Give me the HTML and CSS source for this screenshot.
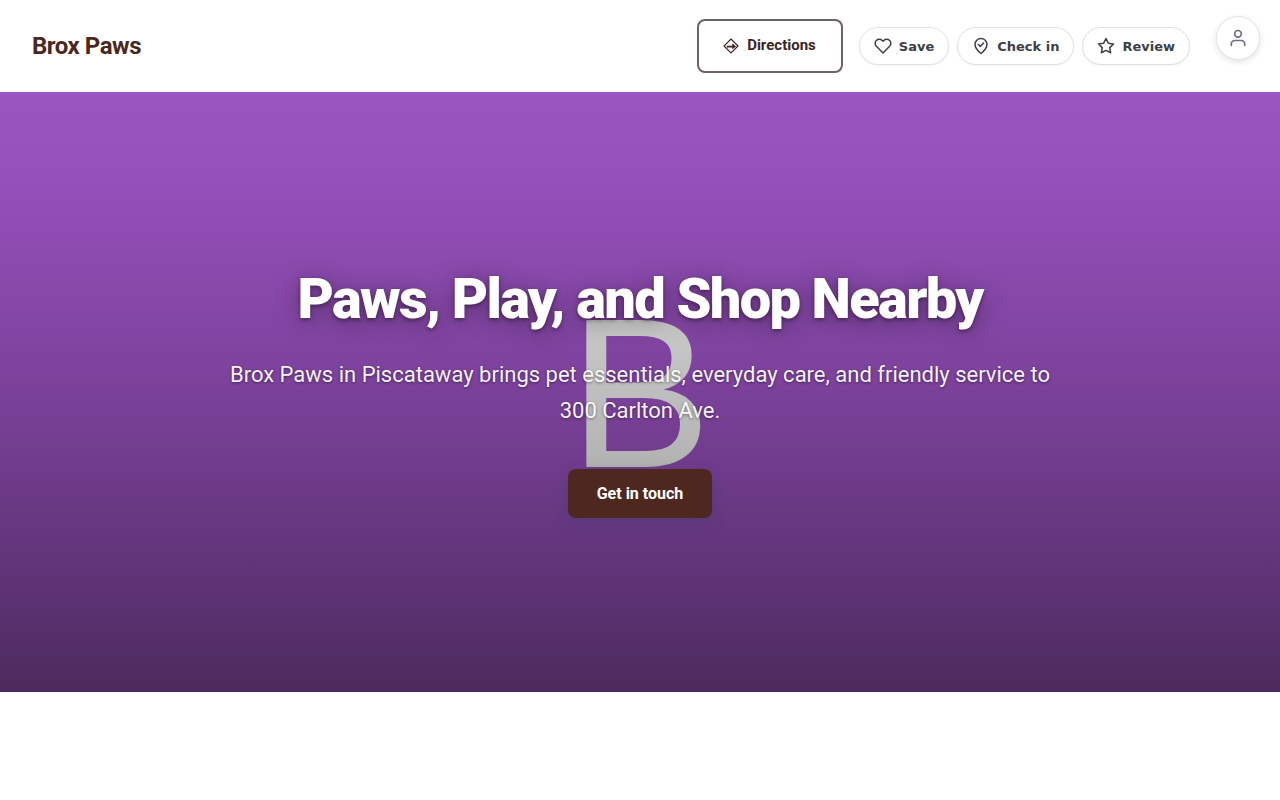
FILE: index.html
```html
<!DOCTYPE html>
<html lang="en">
<head>
<meta charset="utf-8">
<meta name="viewport" content="width=device-width, initial-scale=1">
<title>Brox Paws</title>
<link rel="stylesheet" href="styles.css">
</head>
<body>
<header class="site-header">
  <a class="brand" href="#">Brox Paws</a>
  <nav class="actions" aria-label="Quick actions">
    <a class="directions" href="#">
      <svg class="directions-icon" viewBox="0 0 16 16" fill="none" stroke="currentColor" aria-hidden="true"><path d="M8 1 15 8 8 15 1 8z" stroke-width="1.2"/><path d="M3.800 9.800V7.700H9.300V5.300L13 8.400 9.300 11.200V9.500H5z" fill="currentColor" stroke="none"/></svg>
      <span>Directions</span>
    </a>
    <div class="pills">
      <button class="pill" type="button">
        <svg class="icon" viewBox="0 0 24 24" aria-hidden="true"><path d="M20.84 4.61a5.5 5.5 0 0 0-7.78 0L12 5.67l-1.06-1.06a5.5 5.5 0 0 0-7.78 7.78L12 21.23l8.84-8.84a5.5 5.5 0 0 0 0-7.78z"/></svg>
        <span>Save</span>
      </button>
      <button class="pill" type="button">
        <svg class="icon" viewBox="0 0 24 24" aria-hidden="true"><path d="M12 22s8-6.2 8-12.2A7.9 7.9 0 0 0 12 2a7.9 7.9 0 0 0-8 7.8C4 15.800 12 22 12 22z"/><path d="m8.500 10 2.500 2.500 4.500-4.500"/></svg>
        <span>Check in</span>
      </button>
      <button class="pill" type="button">
        <svg class="icon" viewBox="0 0 24 24" aria-hidden="true"><path d="m12 2 3.090 6.260L22 9.270l-5 4.870 1.180 6.880L12 17.770l-6.180 3.250L7 14.140 2 9.270l6.910-1.010z"/></svg>
        <span>Review</span>
      </button>
    </div>
    <button class="account" type="button" aria-label="Account">
      <svg class="account-icon" viewBox="0 0 24 24" aria-hidden="true"><path d="M20 21v-2a4 4 0 0 0-4-4H8a4 4 0 0 0-4 4v2"/><circle cx="12" cy="7" r="4"/></svg>
    </button>
  </nav>
</header>
<main>
  <section class="hero">
    <div class="monogram" aria-hidden="true">B</div>
    <div class="hero-content">
      <h1 class="hero-title">Paws, Play, and Shop Nearby</h1>
      <p class="hero-text">Brox Paws in Piscataway brings pet essentials, everyday care, and friendly service to 300 Carlton Ave.</p>
      <a class="cta" href="#">Get in touch</a>
    </div>
  </section>
</main>
</body>
</html>
```
FILE: styles.css
```css
* { box-sizing: border-box; }

body {
  margin: 0;
  background: #fff;
  color: #4a281e;
  font-family: Roboto, sans-serif;
}

a { color: inherit; text-decoration: none; }

button { font: inherit; cursor: pointer; }

.site-header {
  display: flex;
  align-items: center;
  justify-content: space-between;
  min-height: 92px;
  padding: 16px 20px 16px 32px;
}

.brand {
  font-size: 24px;
  font-weight: 700;
  line-height: 32px;
  letter-spacing: -0.02em;
}

.actions {
  display: flex;
  align-items: center;
  align-self: stretch;
}

.directions {
  display: flex;
  align-items: center;
  gap: 8px;
  height: 54px;
  margin-right: 16px;
  padding: 0 25px 0 24px;
  border: 2px solid #6e6263;
  border-radius: 8px;
  color: #3b2524;
  font-size: 15px;
  font-weight: 700;
  line-height: 24px;
}

.directions span { padding-bottom: 2px; }

.directions-icon { width: 16px; height: 16px; }

.pills { display: flex; gap: 8px; }

.pill {
  display: flex;
  align-items: center;
  gap: 7px;
  height: 38px;
  padding: 0 14px;
  border: 1px solid #dfe1e4;
  border-radius: 20px;
  background: #fff;
  box-shadow: 0 1px 2px rgba(0, 0, 0, 0.05);
  color: #3c4045;
  font-family: "DejaVu Sans", sans-serif;
  font-size: 13px;
  font-weight: 700;
}

.icon, .account-icon {
  width: 18px;
  height: 18px;
  fill: none;
  stroke: currentColor;
  stroke-width: 2;
  stroke-linecap: round;
  stroke-linejoin: round;
}

.account {
  display: flex;
  align-items: center;
  justify-content: center;
  align-self: flex-start;
  width: 44px;
  height: 44px;
  margin-left: 26px;
  padding: 0;
  border: 1px solid #e3e5e8;
  border-radius: 50%;
  background: #fff;
  box-shadow: 0 2px 6px rgba(0, 0, 0, 0.12);
  color: #6b7078;
}

.account-icon { width: 20px; height: 20px; }

.hero {
  position: relative;
  display: flex;
  align-items: center;
  justify-content: center;
  min-height: 600px;
  padding: 48px 24px;
  background: linear-gradient(180deg, #9b55c1 0%, #9751bd 12%, #7b419a 50%, #5a3170 86%, #4d2a5d 100%);
}

.monogram {
  position: absolute;
  inset: 0;
  display: flex;
  align-items: center;
  justify-content: center;
  padding-top: 2px;
  background: linear-gradient(180deg, #c9c9c9 38%, #b2b2b2 63%);
  background-clip: text;
  color: transparent;
  font-family: "Liberation Sans", sans-serif;
  font-size: 214px;
  line-height: 1;
}

.hero-content {
  position: relative;
  max-width: 900px;
  color: #fff;
  text-align: center;
}

.hero-title {
  margin: 0 0 26px;
  font-size: 56px;
  font-weight: 900;
  line-height: 64px;
  letter-spacing: -0.03em;
  text-shadow: 0 2px 4px rgba(0, 0, 0, 0.4), 0 4px 24px rgba(0, 0, 0, 0.35);
}

.hero-text {
  max-width: 850px;
  margin: 0 auto 40px;
  color: rgba(255, 255, 255, 0.95);
  font-size: 22px;
  line-height: 36px;
  text-shadow: 0 1px 3px rgba(0, 0, 0, 0.45);
}

.cta {
  display: inline-block;
  padding: 13px 29px 12px;
  border-radius: 8px;
  background: #4e281e;
  box-shadow: 0 4px 14px rgba(60, 60, 110, 0.4);
  font-size: 16px;
  font-weight: 700;
  line-height: 24px;
}
```
